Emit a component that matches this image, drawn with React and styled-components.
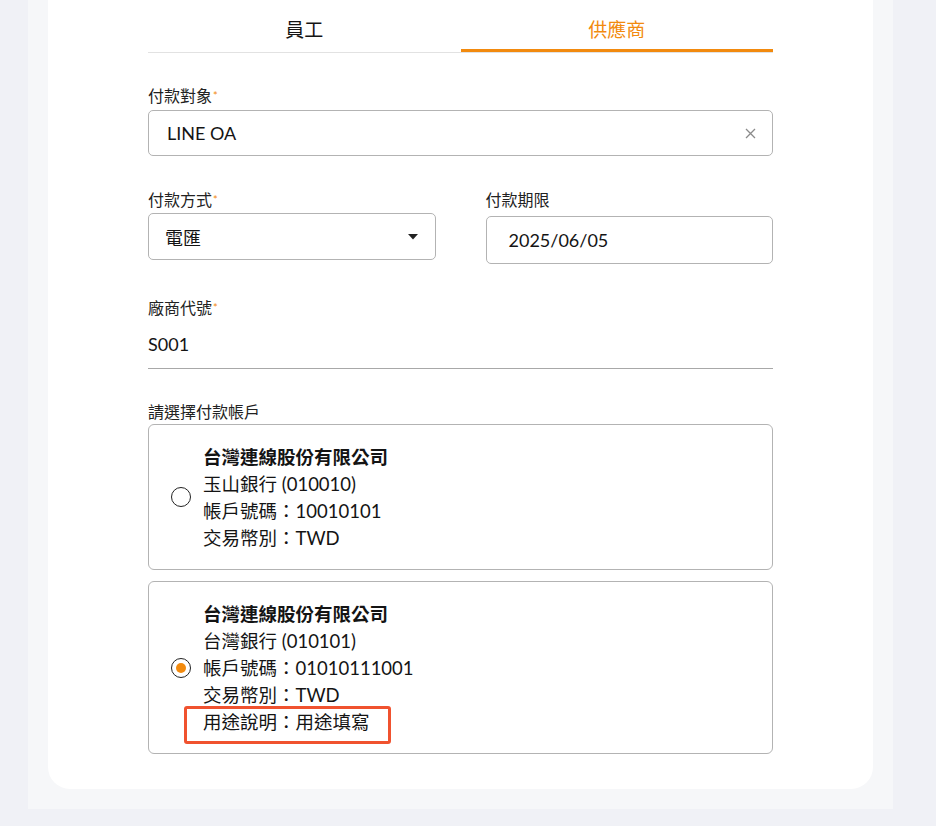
import React, { useState } from "react";
import styled, { createGlobalStyle } from "styled-components";

const ORANGE = "#f28a0e";
const TEXT = "#141414";
const FONT = `Lato, "Noto Sans CJK TC", "Noto Sans", sans-serif`;

const GlobalStyle = createGlobalStyle`
  html, body {
    margin: 0;
    background: #f0f1f6;
    font-family: ${FONT};
    color: ${TEXT};
  }
  * { box-sizing: border-box; }
`;

const accounts = [
  {
    id: "esun",
    company: "台灣連線股份有限公司",
    bank: "玉山銀行 (010010)",
    number: "10010101",
    currency: "TWD",
  },
  {
    id: "bot",
    company: "台灣連線股份有限公司",
    bank: "台灣銀行 (010101)",
    number: "01010111001",
    currency: "TWD",
    purpose: "用途填寫",
  },
];

export default function App() {
  const [tab, setTab] = useState("supplier");
  const [selected, setSelected] = useState("bot");

  return (
    <>
      <GlobalStyle />
      <Page>
        <Panel>
          <Card>
            <Tabs>
              <Tab $active={tab === "staff"} onClick={() => setTab("staff")}>員工</Tab>
              <Tab $active={tab === "supplier"} onClick={() => setTab("supplier")}>供應商</Tab>
            </Tabs>

            <Field $top={33}>
              <Label $gap={4}>付款對象<Required>*</Required></Label>
              <Box $height={46} $pad={18}>
                <Value>LINE OA</Value>
                <IconSlot $shift={-2}>
                  <svg width="11" height="11" viewBox="0 0 11 11">
                    <path d="M1 1L10 10M10 1L1 10" stroke="#8a8a8a" strokeWidth="1.3" />
                  </svg>
                </IconSlot>
              </Box>
            </Field>

            <Row>
              <Field>
                <Label $gap={3}>付款方式<Required>*</Required></Label>
                <Box $height={47} $pad={16}>
                  <Value>電匯</Value>
                  <IconSlot $shift={1}>
                    <svg width="10" height="6" viewBox="0 0 10 6">
                      <path d="M0 0H10L5 5.5Z" fill="#222" />
                    </svg>
                  </IconSlot>
                </Box>
              </Field>
              <Field>
                <Label $gap={6}>付款期限</Label>
                <Box $height={48} $pad={22}>
                  <Value>2025/06/05</Value>
                </Box>
              </Field>
            </Row>

            <Field $top={34}>
              <Label $gap={14}>廠商代號<Required>*</Required></Label>
              <Underlined>S001</Underlined>
            </Field>

            <Field $top={33}>
              <Label $gap={2}>請選擇付款帳戶</Label>
              <AccountList>
                {accounts.map((a) => (
                  <Account key={a.id} onClick={() => setSelected(a.id)}>
                    <Radio $checked={selected === a.id} />
                    <AccountText>
                      <Company>{a.company}</Company>
                      <Line>{a.bank}</Line>
                      <Line>帳戶號碼：{a.number}</Line>
                      <Line>交易幣別：{a.currency}</Line>
                      {a.purpose && (
                        <Line>
                          <Highlight>用途說明：{a.purpose}</Highlight>
                        </Line>
                      )}
                    </AccountText>
                  </Account>
                ))}
              </AccountList>
            </Field>
          </Card>
        </Panel>
      </Page>
    </>
  );
}

const Page = styled.div`
  padding: 0 43px 18px 28px;
`;

const Panel = styled.div`
  background: #f6f7f9;
  padding: 0 20px 20px;
`;

const Card = styled.div`
  background: #fff;
  border-radius: 0 0 22px 22px;
  padding: 0 100px 35px;
`;

const Tabs = styled.div`
  display: grid;
  grid-template-columns: 1fr 1fr;
  border-bottom: 1px solid #e2e2e2;
`;

const Tab = styled.div`
  height: 52px;
  padding-top: 18px;
  text-align: center;
  font-size: 19px;
  line-height: 24px;
  cursor: pointer;
  color: ${(p) => (p.$active ? ORANGE : TEXT)};
  border-bottom: 3px solid ${(p) => (p.$active ? ORANGE : "transparent")};
`;

const Field = styled.div`
  margin-top: ${(p) => (p.$top ? `${p.$top}px` : "0")};
`;

const Row = styled.div`
  display: grid;
  grid-template-columns: 1fr 1fr;
  gap: 50px;
  margin-top: 34px;
`;

const Label = styled.div`
  font-size: 16px;
  line-height: 20px;
  margin-bottom: ${(p) => p.$gap}px;
  color: #222;
`;

const Required = styled.span`
  color: ${ORANGE};
  font-size: 11px;
  vertical-align: top;
  margin-left: 1px;
`;

const Box = styled.div`
  position: relative;
  display: flex;
  align-items: center;
  height: ${(p) => p.$height}px;
  padding: 0 ${(p) => p.$pad}px;
  border: 1px solid #b3b3b3;
  border-radius: 5px;
`;

const Value = styled.span`
  flex: 1;
  font-size: 18px;
`;

const IconSlot = styled.span`
  display: flex;
  margin-right: ${(p) => p.$shift || 0}px;
`;

const Underlined = styled.div`
  font-size: 18px;
  line-height: 24px;
  padding-bottom: 12px;
  border-bottom: 1px solid #a8a8a8;
`;

const AccountList = styled.div`
  display: flex;
  flex-direction: column;
  gap: 11px;
`;

const Account = styled.div`
  display: flex;
  align-items: center;
  gap: 12px;
  padding: 19px 22px 17px;
  border: 1px solid #b3b3b3;
  border-radius: 6px;
  cursor: pointer;
`;

const Radio = styled.span`
  flex: none;
  width: 20px;
  height: 20px;
  margin-top: -2px;
  border-radius: 50%;
  border: 1.5px solid #222;
  display: flex;
  align-items: center;
  justify-content: center;
  &::after {
    content: "";
    width: 10px;
    height: 10px;
    border-radius: 50%;
    background: ${(p) => (p.$checked ? ORANGE : "transparent")};
  }
`;

const AccountText = styled.div`
  font-size: 18.5px;
  line-height: 27px;
`;

const Company = styled.div`
  font-weight: 700;
`;

const Line = styled.div``;

const Highlight = styled.span`
  position: relative;
  &::after {
    content: "";
    position: absolute;
    left: -19px;
    right: -21px;
    top: -5px;
    bottom: -11px;
    border: 3px solid #f0522f;
    border-radius: 3px;
  }
`;
